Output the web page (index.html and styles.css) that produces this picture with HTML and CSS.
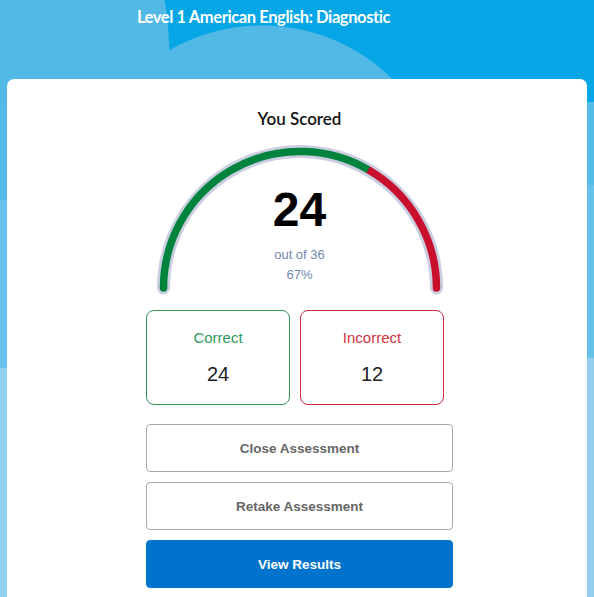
FILE: index.html
```html
<!DOCTYPE html>
<html lang="en">
<head>
<meta charset="utf-8">
<title>Level 1 American English: Diagnostic</title>
<link rel="stylesheet" href="styles.css">
</head>
<body>
<header class="page-header">
  <h1 class="page-title">Level 1 American English: Diagnostic</h1>
</header>
<main class="card">
  <div class="content">
    <h2 class="scored-title">You Scored</h2>
    <div class="gauge">
      <svg class="gauge-svg" width="300" height="160" viewBox="0 0 300 160" aria-hidden="true">
        <path d="M13.5 150 A136.5 136.5 0 0 1 286.5 150" fill="none" stroke="#c9cee0" stroke-width="13" stroke-linecap="round"/>
        <path d="M218.25 31.8 A136.5 136.5 0 0 1 286.5 150" fill="none" stroke="#c8102e" stroke-width="7.5" stroke-linecap="round"/>
        <path d="M13.5 150 A136.5 136.5 0 0 1 218.25 31.8" fill="none" stroke="#00843d" stroke-width="7.5" stroke-linecap="butt"/>
        <circle cx="13.5" cy="150" r="3.75" fill="#00843d"/>
      </svg>
      <div class="gauge-text">
        <div class="score">24</div>
        <div class="score-sub">out of 36</div>
        <div class="score-sub">67%</div>
      </div>
    </div>
    <div class="stats">
      <div class="stat stat-correct">
        <div class="stat-label">Correct</div>
        <div class="stat-value">24</div>
      </div>
      <div class="stat stat-incorrect">
        <div class="stat-label">Incorrect</div>
        <div class="stat-value">12</div>
      </div>
    </div>
    <div class="actions">
      <button class="btn btn-outline" type="button">Close Assessment</button>
      <button class="btn btn-outline" type="button">Retake Assessment</button>
      <button class="btn btn-primary" type="button">View Results</button>
    </div>
  </div>
</main>
</body>
</html>
```
FILE: styles.css
```css
html, body {
  margin: 0;
  padding: 0;
  height: 100%;
}

body {
  overflow: hidden;
  font-family: "Liberation Sans", Arial, sans-serif;
  background:
    linear-gradient(179deg, transparent 368px, #93d0f0 368px),
    linear-gradient(178.5deg, transparent 200px, #66c2ea 200px),
    linear-gradient(to bottom, transparent 102px, #57bbe7 102px),
    radial-gradient(circle 370px at -200px 60px, #52b8e6 99.7%, transparent 100%),
    radial-gradient(circle 186px at 262px 211px, #52b8e6 99.5%, transparent 100%),
    #05a6e6;
}

.page-header {
  height: 79px;
  box-sizing: border-box;
  padding: 7px 67px 0 0;
  text-align: center;
}

.page-title {
  margin: 0;
  font-family: Lato, "Open Sans", sans-serif;
  font-weight: 700;
  font-size: 16.5px;
  letter-spacing: -0.4px;
  line-height: 20px;
  color: #ffffff;
}

.card {
  margin: 0 7px;
  height: 540px;
  background: #ffffff;
  border-radius: 7px 7px 0 0;
  padding: 30px 134px 0 139px;
  box-sizing: border-box;
}

.content {
  display: flex;
  flex-direction: column;
  align-items: center;
}

.scored-title {
  margin: 0;
  font-family: Lato, "Open Sans", sans-serif;
  font-size: 17px;
  line-height: 20px;
  color: #141414;
  font-weight: 600;
}

.gauge {
  position: relative;
  width: 300px;
  height: 160px;
  margin-top: 9px;
}

.gauge-svg {
  position: absolute;
  left: 0;
  top: 0;
}

.gauge-text {
  position: relative;
  padding-top: 48px;
  text-align: center;
}

.score {
  font-weight: 700;
  font-size: 48px;
  line-height: 48px;
  color: #000000;
  margin-bottom: 11px;
}

.score-sub {
  font-size: 13px;
  line-height: 20px;
  color: #6f89ad;
}

.stats {
  align-self: stretch;
  display: flex;
  gap: 10px;
  margin-top: 12px;
}

.stat {
  width: 144px;
  height: 95px;
  box-sizing: border-box;
  border: 1px solid;
  border-radius: 8px;
  padding-top: 17px;
  text-align: center;
}

.stat-correct {
  border-color: #2f9158;
}

.stat-incorrect {
  border-color: #cc2a40;
}

.stat-label {
  font-size: 15px;
  line-height: 20px;
}

.stat-correct .stat-label {
  color: #2f9a5b;
}

.stat-incorrect .stat-label {
  color: #d0323f;
}

.stat-value {
  margin-top: 14px;
  font-size: 20px;
  line-height: 24px;
  color: #222222;
}

.actions {
  align-self: stretch;
  display: flex;
  flex-direction: column;
  gap: 10px;
  margin-top: 19px;
}

.btn {
  height: 48px;
  border-radius: 4px;
  font-family: "Liberation Sans", Arial, sans-serif;
  font-weight: 700;
  font-size: 13.5px;
  cursor: pointer;
}

.btn-outline {
  background: #ffffff;
  border: 1px solid #a9a9a9;
  color: #666666;
}

.btn-primary {
  background: #0074cc;
  border: 1px solid #0074cc;
  color: #ffffff;
}
```
